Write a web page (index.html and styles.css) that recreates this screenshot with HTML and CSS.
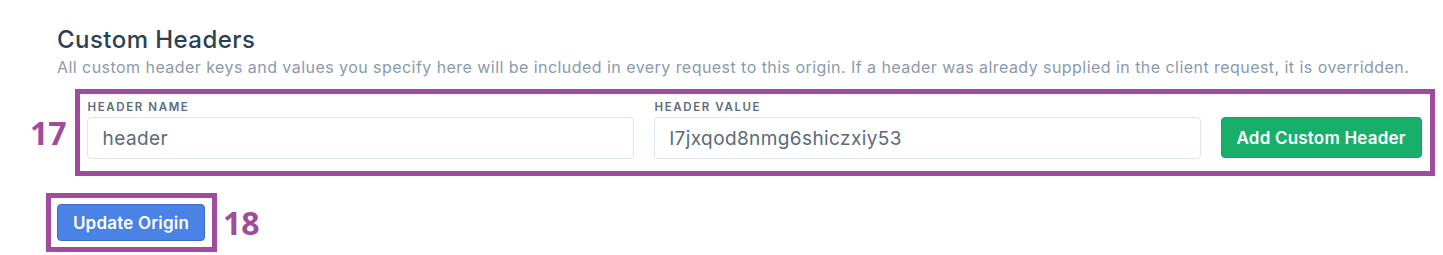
FILE: index.html
```html
<!DOCTYPE html>
<html>
<head>
<meta charset="utf-8">
<link rel="stylesheet" href="styles.css">
</head>
<body>
<div class="page">
  <div class="heading">
    <h2 class="title">Custom Headers</h2>
    <p class="subtitle">All custom header keys and values you specify here will be included in every request to this origin. If a header was already supplied in the client request, it is overridden.</p>
  </div>
  <div class="annot-row row17">
    <span class="annot-num">17</span>
    <div class="annot-box box17">
      <div class="form-row">
        <div class="field">
          <label class="field-label">Header Name</label>
          <div class="input">header</div>
        </div>
        <div class="field">
          <label class="field-label">Header Value</label>
          <div class="input">l7jxqod8nmg6shiczxiy53</div>
        </div>
        <button class="btn btn-green">Add Custom Header</button>
      </div>
    </div>
  </div>
  <div class="annot-row row18">
    <div class="annot-box box18">
      <button class="btn btn-blue">Update Origin</button>
    </div>
    <span class="annot-num">18</span>
  </div>
</div>
</body>
</html>
```
FILE: styles.css
```css
* { box-sizing: border-box; }
html, body { margin: 0; padding: 0; background: #ffffff; }
body { font-family: "Inter", "Liberation Sans", sans-serif; }
.page { width: 1443px; height: 255px; padding-top: 26px; }
.heading { padding-left: 57px; }
.title { margin: 0; font-size: 24px; line-height: 28px; font-weight: 500; letter-spacing: 0.45px; color: #2f3f52; }
.subtitle { margin: 3px 0 0; font-size: 16px; line-height: 20px; letter-spacing: 0.45px; color: #8b9aac; white-space: nowrap; }
.annot-row { display: flex; align-items: center; }
.row17 { margin-top: 12px; padding-left: 30px; gap: 8px; }
.row18 { margin-top: 17px; padding-left: 46px; gap: 6px; }
.annot-num { font-family: "Open Sans", "Liberation Sans", sans-serif; font-weight: 700; font-size: 32px; line-height: 40px; color: #a04b9e; }
.annot-box { border: 5px solid #a04b9e; }
.box17 { width: 1360px; padding: 6px 8px 12px 7px; }
.box18 { padding: 6px 7px 6px 6px; }
.form-row { display: flex; align-items: flex-end; gap: 20px; }
.field { flex: 1; display: flex; flex-direction: column; }
.field-label { font-size: 11.5px; line-height: 14px; font-weight: 600; letter-spacing: 1.6px; text-transform: uppercase; color: #5f6b7c; margin: 0 0 3px 1px; }
.input { height: 42px; border: 1px solid #dfe5ec; border-radius: 4px; padding: 0 15px; display: flex; align-items: center; font-size: 19px; letter-spacing: 0.4px; color: #5a6a7c; }
.btn { border: 1px solid transparent; border-radius: 4px; font-family: "Inter", "Liberation Sans", sans-serif; font-weight: 600; font-size: 17px; letter-spacing: 0.2px; color: #ffffff; padding: 0; cursor: pointer; }
.btn-green { width: 201px; height: 41px; margin-bottom: 1px; background: #17b06b; border-color: #14a062; }
.btn-blue { width: 148px; height: 37px; background: #4a82e6; border-color: #3a6fd0; }
```
